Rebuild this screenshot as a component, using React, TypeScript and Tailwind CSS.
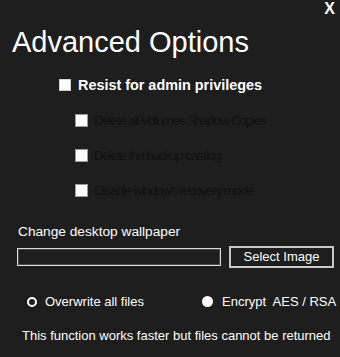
import React from 'react';

const subOptions = [
  'Delete all Volumes Shadow Copies',
  'Delete the backup catalog',
  'Disable windows recovery mode',
];

export default function App() {
  return (
    <div className="w-[340px] h-[357px] bg-[#1e1e1e] text-white font-['Liberation_Sans',Arial,sans-serif] flex flex-col overflow-hidden">
      <div className="flex justify-end pr-[5px] h-[18px]">
        <span className="text-[16px] leading-[18px] font-bold">X</span>
      </div>

      <h1 className="mt-[8px] pl-[12px] text-[29px] leading-[32px] font-normal">Advanced Options</h1>

      <label className="mt-[19px] pl-[59px] flex items-center gap-[7px] h-[16px]">
        <span className="w-[12px] h-[12px] bg-white border border-[#d0d0d0]" />
        <span className="text-[14.4px] leading-[16px] font-bold">Resist for admin privileges</span>
      </label>

      <div className="mt-[20px] pl-[75px] flex flex-col gap-[20px]">
        {subOptions.map((opt) => (
          <div key={opt} className="flex items-center gap-[6px] h-[15px]">
            <span className="w-[13px] h-[13px] bg-white border border-[#9a9a9a] shrink-0" />
            <span className="text-[13.5px] leading-[15px] tracking-[-1.2px] text-[#121212]">{opt}</span>
          </div>
        ))}
      </div>

      <div className="mt-[26px] pl-[18px] text-[13.7px] leading-[16px]">Change desktop wallpaper</div>

      <div className="mt-[6px] pl-[17px] flex items-center gap-[8px] h-[22px]">
        <div className="w-[204px] h-[18px] border border-[#dcdcdc] shadow-[inset_0_0_0_1px_#4a4a4a]" />
        <button className="w-[105px] h-[22px] border-2 border-[#c8c8c8] bg-[#1e1e1e] text-[13px] leading-[16px] text-white">
          Select Image
        </button>
      </div>

      <div className="mt-[26px] flex items-center h-[15px] text-[13px] leading-[15px]">
        <div className="pl-[27px] flex items-center gap-[8px] w-[202px]">
          <span className="w-[10px] h-[10px] rounded-full border-2 border-white" />
          <span>Overwrite all files</span>
        </div>
        <div className="flex items-center gap-[9px]">
          <span className="w-[11px] h-[11px] rounded-full bg-white" />
          <span>Encrypt&nbsp; AES / RSA</span>
        </div>
      </div>

      <p className="mt-[19px] pl-[22px] text-[13px] leading-[15px] whitespace-nowrap">
        This function works faster but files cannot be returned
      </p>
    </div>
  );
}
